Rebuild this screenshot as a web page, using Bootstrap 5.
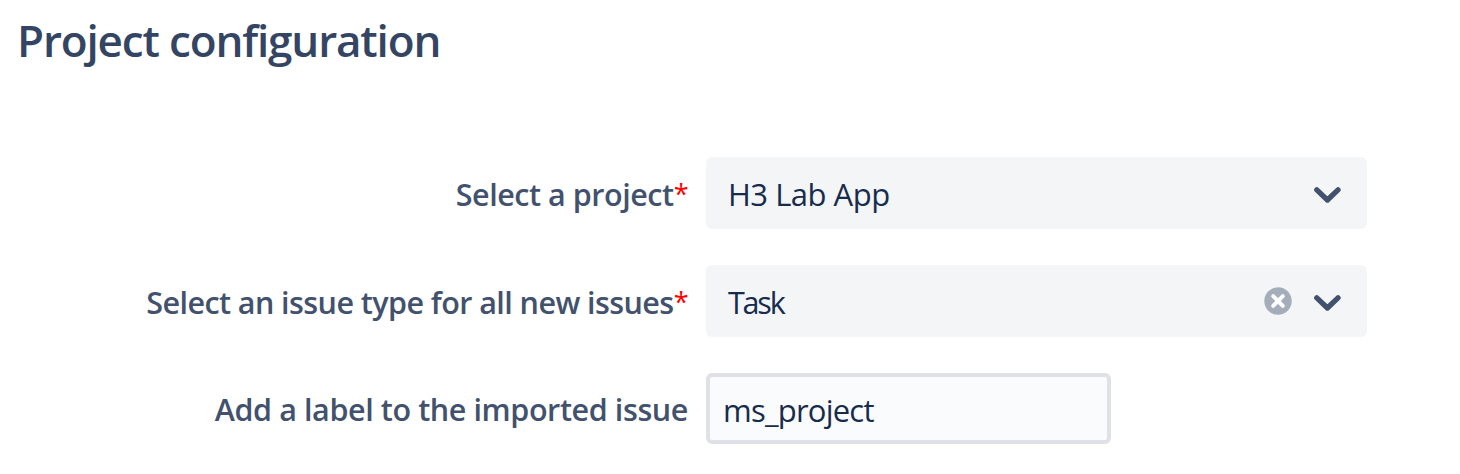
<!DOCTYPE html>
<html lang="en">
<head>
<meta charset="utf-8">
<meta name="viewport" content="width=device-width, initial-scale=1">
<title>Project configuration</title>
<link href="https://cdn.jsdelivr.net/npm/bootstrap@5.3.0/dist/css/bootstrap.min.css" rel="stylesheet">
<style>
  body { font-family: "Segoe UI", "Open Sans", "Noto Sans", sans-serif; font-size: 31px; line-height: 44px; color: #172b4d; overflow: hidden; }
  h1 { font-size: 44px; line-height: 60px; font-weight: 600; color: #344563; letter-spacing: -1.15px; padding: 10px 0 0 17px; margin-bottom: 87px; }
  .config-form { gap: 36px; }
  .config-row { gap: 18px; height: 72px; }
  .config-label { width: 688px; font-size: 30.5px; font-weight: 600; color: #42526e; letter-spacing: -.5px; white-space: nowrap; padding-top: 2px; }
  .label-project { letter-spacing: -.46px; }
  .label-type { letter-spacing: -.57px; }
  .label-tag { letter-spacing: -.4px; padding-top: 14px; }
  .required { color: #f00; font-weight: 400; font-size: 27px; line-height: 1; vertical-align: 2px; letter-spacing: -1.5px; margin-right: 1px; }
  .picker { width: 661px; height: 72px; background: #f4f5f7; border-radius: 6px; padding: 2px 24px 0 22px; letter-spacing: -.5px; }
  .picker svg { display: block; }
  .short-value { font-size: 30.5px; letter-spacing: -2.2px; }
  .chevron { margin: 2px 1px 0 0; }
  .clear-icon { margin: -2px 19px 0 0; }
  .label-input.form-control { width: 405px; height: 71px; border: 4px solid #dfe1e6; border-radius: 6px; background: #fafbfc; color: #172b4d; font-size: 31px; line-height: 44px; padding: 2px 13px 0; letter-spacing: -.78px; }
</style>
</head>
<body class="bg-white">
<h1>Project configuration</h1>
<form class="config-form d-flex flex-column">
  <div class="config-row d-flex align-items-center">
    <label class="config-label label-project text-end">Select a project<span class="required">*</span></label>
    <div class="picker d-flex align-items-center justify-content-between">
      <span>H3 Lab App</span>
      <svg class="chevron" width="30" height="20" viewBox="0 0 30 20" fill="none" stroke="#42526e" stroke-width="5.3" stroke-linecap="round" stroke-linejoin="round"><path d="M4.8 4.8 15.4 15 26 4.8"/></svg>
    </div>
  </div>
  <div class="config-row d-flex align-items-center">
    <label class="config-label label-type text-end">Select an issue type for all new issues<span class="required">*</span></label>
    <div class="picker d-flex align-items-center">
      <span class="short-value me-auto">Task</span>
      <svg class="clear-icon" width="30" height="30" viewBox="0 0 30 30"><circle cx="15" cy="15" r="13.7" fill="#a5adba"/><path d="m10.2 10.2 9.6 9.6m0-9.6-9.6 9.6" stroke="#fff" stroke-width="4" stroke-linecap="round"/></svg>
      <svg class="chevron" width="30" height="20" viewBox="0 0 30 20" fill="none" stroke="#42526e" stroke-width="5.3" stroke-linecap="round" stroke-linejoin="round"><path d="M4.8 4.8 15.4 15 26 4.8"/></svg>
    </div>
  </div>
  <div class="config-row d-flex align-items-start">
    <label class="config-label label-tag text-end" for="issueLabel">Add a label to the imported issue</label>
    <input id="issueLabel" class="form-control label-input" type="text" value="ms_project">
  </div>
</form>
<script src="https://cdn.jsdelivr.net/npm/bootstrap@5.3.0/dist/js/bootstrap.bundle.min.js"></script>
</body>
</html>
